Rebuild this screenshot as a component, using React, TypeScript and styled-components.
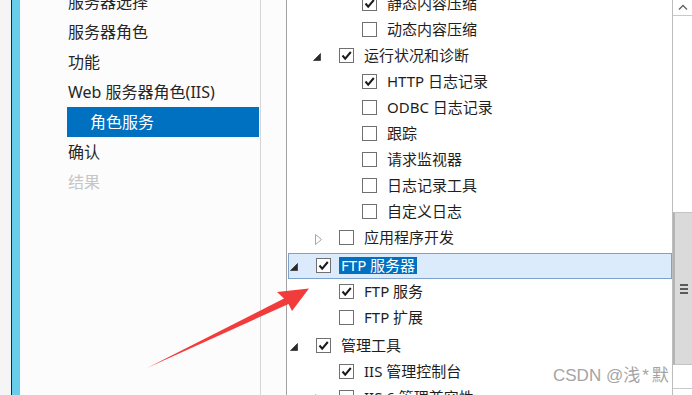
import React from "react";
import styled, { createGlobalStyle } from "styled-components";

const GlobalStyle = createGlobalStyle`
    html, body {
        margin: 0;
        padding: 0;
        background: #ffffff;
    }
    body {
        width: 692px;
        height: 395px;
        overflow: hidden;
        font-family: "Noto Sans", "Noto Sans CJK SC", sans-serif;
    }
`;

const FONT = `"Noto Sans", "Noto Sans CJK SC", sans-serif`;

const Page = styled.div`
    position: relative;
    display: flex;
    width: 692px;
    height: 395px;
    overflow: hidden;
`;

const Gutter = styled.div`
    width: 11px;
    background: #f5f5f5;
    border-right: 1px solid #262626;
`;

const AccentBar = styled.div`
    width: 8px;
    background: #67cdeb;
`;

const NavPanel = styled.nav`
    width: 240px;
    background: #fcfcfc;
    border-right: 1px solid #d6d6d6;
    overflow: hidden;
`;

const NavList = styled.ul`
    list-style: none;
    margin: -13.5px 0 0 0;
    padding: 0;
`;

const NavItem = styled.li<{ $active?: boolean; $disabled?: boolean; $sub?: boolean }>`
    height: 30px;
    line-height: 30px;
    margin: 0 1px 0 47px;
    padding-left: ${(p) => (p.$sub ? "23px" : "1px")};
    font-family: ${FONT};
    font-size: 16px;
    white-space: nowrap;
    color: ${(p) => (p.$active ? "#ffffff" : p.$disabled ? "#c6c6c6" : "#262626")};
    background: ${(p) => (p.$active ? "#0070c0" : "transparent")};
`;

const Spacer = styled.div`
    width: 25px;
    background: #fcfcfc;
    border-right: 1px solid #a3a3a3;
`;

const TreePanel = styled.div`
    width: 385px;
    background: #ffffff;
    overflow: hidden;
`;

const TreeList = styled.div`
    margin-top: -9.5px;
`;

const Row = styled.div<{ $level: number; $selected?: boolean; $top?: boolean }>`
    display: flex;
    align-items: center;
    box-sizing: border-box;
    height: 26px;
    margin: ${(p) => (p.$top ? "2px" : "0")} 0 0 1px;
    padding-left: ${(p) => 1 + p.$level * 23}px;
    border: 1px solid ${(p) => (p.$selected ? "#7da2ce" : "transparent")};
    background: ${(p) => (p.$selected ? "#dcebfc" : "transparent")};
`;

const ExpanderSlot = styled.div`
    width: 26px;
    height: 24px;
    display: flex;
    align-items: center;
    flex-shrink: 0;
`;

const Box = styled.div`
    width: 15px;
    height: 15px;
    box-sizing: border-box;
    border: 1px solid #707070;
    background: #ffffff;
    flex-shrink: 0;
    display: flex;
    align-items: center;
    justify-content: center;
`;

const Label = styled.span<{ $selected?: boolean }>`
    margin-left: 8px;
    padding: 0 2px;
    height: 17px;
    line-height: 17px;
    font-family: ${FONT};
    font-size: 15px;
    white-space: nowrap;
    color: ${(p) => (p.$selected ? "#ffffff" : "#1e1e1e")};
    background: ${(p) => (p.$selected ? "#0070c0" : "transparent")};
`;

const ScrollBar = styled.div`
    width: 19px;
    border-left: 1px solid #bdbdbd;
    background: #ffffff;
    display: flex;
    flex-direction: column;
    overflow: hidden;
`;

const ArrowButton = styled.div<{ $down?: boolean }>`
    height: 15px;
    flex-shrink: 0;
    display: flex;
    align-items: center;
    justify-content: center;
    border-${(p) => (p.$down ? "top" : "bottom")}: 1px solid #c9c9c9;
`;

const Track = styled.div`
    height: 372px;
    flex-shrink: 0;
    display: flex;
    flex-direction: column;
`;

const Thumb = styled.div`
    margin-top: 196px;
    height: 153px;
    box-sizing: border-box;
    background: #dadada;
    border-left: 2px solid #b4b4b4;
    border-top: 1px solid #c4c4c4;
    border-bottom: 1px solid #c4c4c4;
    display: flex;
    flex-direction: column;
    align-items: center;
    justify-content: center;
    gap: 2px;
`;

const Grip = styled.div`
    width: 8px;
    height: 2px;
    background: #5a5a5a;
`;

const Watermark = styled.div`
    position: absolute;
    left: 553px;
    top: 366px;
    font-family: "Liberation Sans", "Noto Sans CJK SC", sans-serif;
    font-size: 17px;
    line-height: 20px;
    color: #a4a4a4;
    white-space: nowrap;
    pointer-events: none;
`;

const Star = styled.span`
    padding: 0 3px 0 2px;
`;

const Overlay = styled.svg`
    position: absolute;
    left: 0;
    top: 0;
    pointer-events: none;
`;

type TreeNode = {
    level: number;
    label: string;
    checked?: boolean;
    expander?: "open" | "closed";
    selected?: boolean;
};

const nodes: TreeNode[] = [
    { level: 2, label: "静态内容压缩", checked: true },
    { level: 2, label: "动态内容压缩" },
    { level: 1, label: "运行状况和诊断", checked: true, expander: "open" },
    { level: 2, label: "HTTP 日志记录", checked: true },
    { level: 2, label: "ODBC 日志记录" },
    { level: 2, label: "跟踪" },
    { level: 2, label: "请求监视器" },
    { level: 2, label: "日志记录工具" },
    { level: 2, label: "自定义日志" },
    { level: 1, label: "应用程序开发", expander: "closed" },
    { level: 0, label: "FTP 服务器", checked: true, expander: "open", selected: true },
    { level: 1, label: "FTP 服务", checked: true },
    { level: 1, label: "FTP 扩展" },
    { level: 0, label: "管理工具", checked: true, expander: "open" },
    { level: 1, label: "IIS 管理控制台", checked: true },
    { level: 1, label: "IIS 6 管理兼容性", expander: "closed" },
];

const Expander: React.FC<{ kind?: "open" | "closed" }> = ({ kind }) => {
    if (kind === "open") {
        return (
            <svg width="8" height="8" viewBox="0 0 8 8" style={{ marginTop: 2 }}>
                <polygon points="7.5,0.5 7.5,7.5 0.5,7.5" fill="#2b2b2b" stroke="#3a3a3a" strokeWidth="0.8" />
            </svg>
        );
    }
    if (kind === "closed") {
        return (
            <svg width="8" height="11" viewBox="0 0 8 11" style={{ marginLeft: 2, marginTop: 4 }}>
                <polygon points="0.5,0.5 6.5,5.5 0.5,10.5" fill="#ffffff" stroke="#a6a6a6" strokeWidth="1" />
            </svg>
        );
    }
    return null;
};

const CheckBox: React.FC<{ checked?: boolean }> = ({ checked }) => (
    <Box>
        {checked && (
            <svg width="13" height="13" viewBox="0 0 13 13">
                <polyline points="2.5,6.5 5.2,9.6 10.8,3" fill="none" stroke="#1a1a1a" strokeWidth="2" />
            </svg>
        )}
    </Box>
);

export default function App() {
    return (
        <>
            <GlobalStyle />
            <Page>
                <Gutter />
                <AccentBar />
                <NavPanel>
                    <NavList>
                        <NavItem>服务器选择</NavItem>
                        <NavItem>服务器角色</NavItem>
                        <NavItem>功能</NavItem>
                        <NavItem>Web 服务器角色(IIS)</NavItem>
                        <NavItem $active $sub>角色服务</NavItem>
                        <NavItem>确认</NavItem>
                        <NavItem $disabled>结果</NavItem>
                    </NavList>
                </NavPanel>
                <Spacer />
                <TreePanel>
                    <TreeList>
                        {nodes.map((n, i) => (
                            <Row key={i} $level={n.level} $selected={n.selected} $top={n.level === 0}>
                                <ExpanderSlot>
                                    <Expander kind={n.expander} />
                                </ExpanderSlot>
                                <CheckBox checked={n.checked} />
                                <Label $selected={n.selected}>{n.label}</Label>
                            </Row>
                        ))}
                    </TreeList>
                </TreePanel>
                <ScrollBar>
                    <ArrowButton>
                        <svg width="10" height="7" viewBox="0 0 10 7">
                            <polyline points="1,5.5 5,1.5 9,5.5" fill="none" stroke="#606060" strokeWidth="1.3" />
                        </svg>
                    </ArrowButton>
                    <Track>
                        <Thumb>
                            <Grip />
                            <Grip />
                            <Grip />
                        </Thumb>
                    </Track>
                    <ArrowButton $down />
                </ScrollBar>
                <Overlay width="692" height="395" viewBox="0 0 692 395">
                    <polygon
                        points="147,368 284,298.5 277,292 309,288.5 292,311 288.5,304"
                        fill="#f23b3b"
                    />
                </Overlay>
                <Watermark>
                    CSDN @浅<Star>*</Star>默
                </Watermark>
            </Page>
        </>
    );
}
